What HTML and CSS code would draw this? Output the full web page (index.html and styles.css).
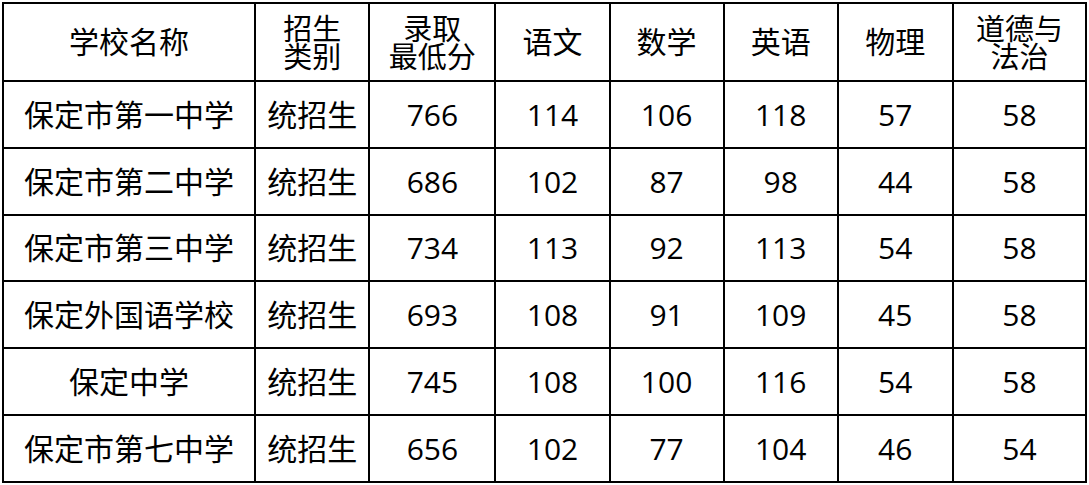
FILE: index.html
```html
<!DOCTYPE html>
<html lang="zh-CN">
<head>
<meta charset="utf-8">
<title>保定市高中录取分数</title>
<link rel="stylesheet" href="styles.css">
</head>
<body>
<table class="scores">
  <colgroup>
    <col class="c-school"><col class="c-type"><col class="c-total"><col class="c-sub"><col class="c-sub"><col class="c-sub"><col class="c-sub2"><col class="c-last">
  </colgroup>
  <thead>
    <tr class="head">
      <th>学校名称</th>
      <th><span class="two">招生<br>类别</span></th>
      <th><span class="two">录取<br>最低分</span></th>
      <th>语文</th>
      <th>数学</th>
      <th>英语</th>
      <th>物理</th>
      <th><span class="two">道德与<br>法治</span></th>
    </tr>
  </thead>
  <tbody>
    <tr class="r1"><td>保定市第一中学</td><td>统招生</td><td>766</td><td>114</td><td>106</td><td>118</td><td>57</td><td>58</td></tr>
    <tr class="r2"><td>保定市第二中学</td><td>统招生</td><td>686</td><td>102</td><td>87</td><td>98</td><td>44</td><td>58</td></tr>
    <tr class="r3"><td>保定市第三中学</td><td>统招生</td><td>734</td><td>113</td><td>92</td><td>113</td><td>54</td><td>58</td></tr>
    <tr class="r4"><td>保定外国语学校</td><td>统招生</td><td>693</td><td>108</td><td>91</td><td>109</td><td>45</td><td>58</td></tr>
    <tr class="r5"><td>保定中学</td><td>统招生</td><td>745</td><td>108</td><td>100</td><td>116</td><td>54</td><td>58</td></tr>
    <tr class="r6"><td>保定市第七中学</td><td>统招生</td><td>656</td><td>102</td><td>77</td><td>104</td><td>46</td><td>54</td></tr>
  </tbody>
</table>
</body>
</html>
```
FILE: styles.css
```css
html, body {
  margin: 0;
  padding: 0;
  background: #ffffff;
}
body {
  padding: 2px 0 0 2px;
  font-family: "Open Sans", "Noto Sans CJK SC", sans-serif;
  color: #000000;
}
.scores {
  border-collapse: collapse;
  table-layout: fixed;
  width: 1085px;
}
.c-school { width: 252px; }
.c-type { width: 114px; }
.c-total { width: 126px; }
.c-sub { width: 114px; }
.c-sub2 { width: 115px; }
.c-last { width: 133px; }
.scores th,
.scores td {
  border: 2px solid #000000;
  text-align: center;
  vertical-align: middle;
  padding: 0;
  font-size: 30px;
  font-weight: 400;
  line-height: 1;
  white-space: nowrap;
}
.head { height: 78px; }
.r1, .r2, .r4, .r5, .r6 { height: 67px; }
.r3 { height: 66px; }
.two {
  display: inline-block;
  font-size: 29px;
  line-height: 28px;
  padding-top: 2px;
}
```
